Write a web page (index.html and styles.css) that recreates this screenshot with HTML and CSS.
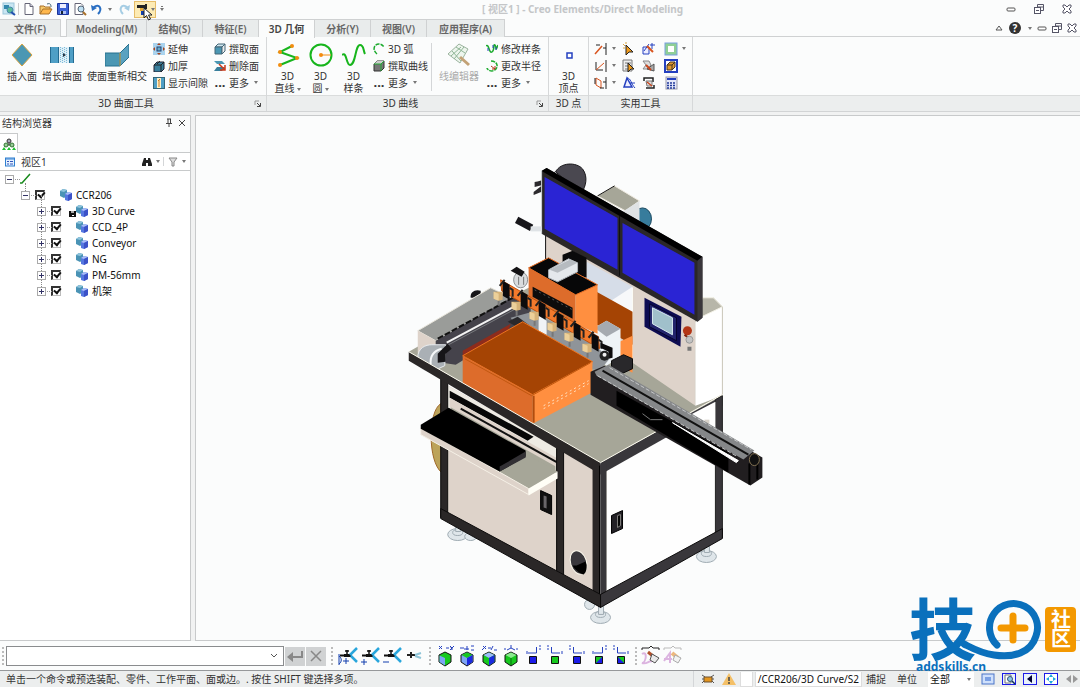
FILE: index.html
```html
<!DOCTYPE html>
<html lang="zh-CN">
<head>
<meta charset="utf-8">
<title>[ 视区1 ] - Creo Elements/Direct Modeling</title>
<link rel="stylesheet" href="styles.css">
</head>
<body>
<svg class="defs" aria-hidden="true">
  <symbol id="part" viewBox="0 0 12 12"><path d="M0 2l3-2 4 1v6l-3 2-4-2z" fill="#4a93b5"/><path d="M0 2l3-2 4 1-3 2z" fill="#8fc4dc"/><path d="M5 5l3-2 4 1v6l-4 2-3-1z" fill="#5577e0"/><path d="M5 5l3-2 4 1-4 2z" fill="#a9bdf7"/><path d="M8 6l4-2v6l-4 2z" fill="#3c52c8"/></symbol>
  <symbol id="win-min" viewBox="0 0 10 10"><rect x="1" y="4" width="8" height="3" rx="1" fill="#fff" stroke="#555"/></symbol>
  <symbol id="win-res" viewBox="0 0 10 10"><path d="M3.500 3V.5h6v6H7" fill="none" stroke="#556"/><rect x=".5" y="3.500" width="6" height="6" fill="#fff" stroke="#556"/><path d="M2 6.500h3M4 3h5" stroke="#556"/></symbol>
  <symbol id="win-x" viewBox="0 0 10 10"><path d="M1 1h2l2 2 2-2h2v2L7 5l2 2v2H7L5 7 3 9H1V7l2-2-2-2z" fill="#fff" stroke="#556"/></symbol>
  <symbol id="launch" viewBox="0 0 8 8"><path d="M1 5V1h4" fill="none" stroke="#999"/><path d="M3 3l3 3M6.500 3v3.500H3" fill="none" stroke="#444"/></symbol>
  <symbol id="tool" viewBox="0 0 22 20"><path d="M6 8h7l1 3H6z" fill="#111"/><path d="M2 9.500h5" stroke="#111" stroke-width="2"/><path d="M9 4v4M7 5h4" stroke="#111" stroke-width="1.500"/><path d="M12 9l7-7M13 10l6 6" stroke="#29a6dc" stroke-width="2.500"/></symbol>
</svg>
<div class="app">
  <header class="titlebar">
    <div class="quick">
      <button aria-label="Creo"><svg viewBox="0 0 14 14"><rect x="1" y="1" width="11" height="11" fill="#c9e6f2" stroke="#9cc6da"/><path d="M2 3h5v4H2z" fill="#3388ad"/><circle cx="8" cy="8" r="3" fill="#5dbb9b" stroke="#48a"/><path d="M9 10l4 3" stroke="#224fae" stroke-width="2"/></svg></button>
      <i class="bar"></i>
      <button aria-label="新建"><svg viewBox="0 0 14 14"><path d="M3 1.500h5l3 3v8H3z" fill="#fff" stroke="#667"/><path d="M8 1.500v3h3" fill="#ccd" stroke="#667"/></svg></button>
      <button aria-label="打开"><svg viewBox="0 0 14 14"><path d="M1 12V4h4l1 1h5v2" fill="#f7c96b" stroke="#a8712a"/><path d="M1 12l3-5h9l-3 5z" fill="#ffb84d" stroke="#a8712a"/><path d="M8 2c3-1 4 0 4 3" fill="none" stroke="#467"/></svg></button>
      <button aria-label="保存"><svg viewBox="0 0 14 14"><path d="M1.500 1.500h11v11h-11z" fill="#3b62d6" stroke="#1a349a"/><path d="M4 2h6v4H4z" fill="#eef"/><path d="M4 9h6v3H4z" fill="#aec0f3"/><path d="M5 9h2v3H5z" fill="#123"/></svg></button>
      <button aria-label="预览"><svg viewBox="0 0 14 14"><path d="M2 1.500h6l2 2v9H2z" fill="#fff" stroke="#667"/><circle cx="8" cy="7" r="3" fill="#bfe0f2" stroke="#567"/><path d="M10 10l3 3" stroke="#a8712a" stroke-width="2"/></svg></button>
      <button aria-label="撤销"><svg viewBox="0 0 14 14"><path d="M4 5c5-4 9 2 4 7" fill="none" stroke="#2a6fc2" stroke-width="2"/><path d="M1 3l1 6 5-3z" fill="#2a6fc2"/></svg></button>
      <button class="tiny" aria-label="撤销列表"><i class="caret"></i></button>
      <button aria-label="重做"><svg viewBox="0 0 14 14"><path d="M10 5C5 1 1 7 6 12" fill="none" stroke="#a5cde4" stroke-width="2"/><path d="M13 3l-1 6-5-3z" fill="#a5cde4"/></svg></button>
      <button class="hot" aria-label="测量"><svg viewBox="0 0 14 14"><path d="M1 3h8v3H1zM9 2h2v5H9z" fill="#222"/><path d="M4 6h3v3H4z" fill="#e8a82e"/><path d="M5 9h3v4H5z" fill="#123fae"/></svg><i class="caret"></i></button>
      <button class="tiny custom" aria-label="自定义"><i class="caret"></i></button>
    </div>
    <h1>[ 视区1 ] - Creo Elements/Direct Modeling</h1>
    <div class="winctl"><button aria-label="最小化"><svg><use href="#win-min"/></svg></button><button aria-label="还原"><svg><use href="#win-res"/></svg></button><button aria-label="关闭"><svg><use href="#win-x"/></svg></button></div>
    <svg class="cursor" viewBox="0 0 10 14"><path d="M1 1v10l2.500-2.500 2 4.500 2-1-2-4H9z" fill="#fff" stroke="#222"/></svg>
  </header>

  <nav class="tabs">
    <button class="file">文件(F)</button>
    <button class="w80">Modeling(M)</button><button>结构(S)</button><button>特征(E)</button><button class="on">3D 几何</button><button>分析(Y)</button><button>视图(V)</button><button class="w78">应用程序(A)</button>
    <div class="docctl">
      <button aria-label="折叠"><svg viewBox="0 0 10 10"><path d="M2 7l3-4 3 4z" fill="#fff" stroke="#555"/></svg></button>
      <button class="help" aria-label="帮助">?</button>
      <button class="tiny" aria-label="帮助列表"><i class="caret"></i></button>
      <button aria-label="最小化文档"><svg><use href="#win-min"/></svg></button><button aria-label="还原文档"><svg><use href="#win-res"/></svg></button><button aria-label="关闭文档"><svg><use href="#win-x"/></svg></button>
    </div>
  </nav>

  <div class="ribbon">
    <section class="group g1">
      <div class="tools">
        <button class="big"><svg viewBox="0 0 24 24"><path d="M12 1l10 11-10 11L2 12z" fill="#4b97b3" stroke="#d9a441"/></svg>插入面</button>
        <button class="big"><svg viewBox="0 0 24 24"><rect x="0" y="4" width="24" height="16" fill="#4f9fc6"/><rect x="9" y="4" width="10" height="16" fill="#dff0f8"/><path d="M.5 4v16M8.500 4v16M19.500 4v16M23.500 4v16" stroke="#256b91"/><path d="M10.500 4v16M12.500 5v15M14.500 4v16M16.500 5v15" stroke="#7fbbd8" stroke-dasharray="1 1"/><path d="M13 10l3 2-3 2z" fill="#234"/></svg>增长曲面</button>
        <button class="big"><svg viewBox="0 0 24 24"><path d="M0 10h15v13H0z" fill="#4b97b3" stroke="#27708e"/><path d="M15 10l9-9v13l-9 9z" fill="#5aa2c0" stroke="#27708e"/><path d="M15 10v13" stroke="#d9a441"/></svg>使面重新相交</button>
        <div class="col">
          <button><svg viewBox="0 0 12 12"><rect width="12" height="12" fill="#a9d3ee"/><rect x="4" y="4" width="4" height="4" fill="#68aac8" stroke="#247"/><path d="M4 2l2-2 2 2zM4 10l2 2 2-2zM2 4L0 6l2 2zM10 4l2 2-2 2z" fill="#a6441e"/></svg>延伸</button>
          <button><svg viewBox="0 0 12 12"><path d="M1 5l3-3h7v7l-3 3H1z" fill="#397f9c" stroke="#223"/><path d="M1 5h7v7M8 5l3-3M4 4l3-3" fill="none" stroke="#222"/></svg>加厚</button>
          <button><svg viewBox="0 0 12 12"><rect x=".5" y=".5" width="11" height="11" fill="#4f9fc6" stroke="#367"/><path d="M4 1h4v10H4z" fill="#fff1c8"/><path d="M6 3v7M5 4l2-2" stroke="#c47b20"/></svg>显示间隙</button>
        </div>
        <div class="col">
          <button><svg viewBox="0 0 12 12"><path d="M1 4l3-3h7l-3 3z" fill="#cfe6ef" stroke="#467"/><path d="M1 4h7v7H1z" fill="#4b97b3" stroke="#467"/><path d="M8 4l3-3v7l-3 3z" fill="#eee" stroke="#467"/></svg>撰取面</button>
          <button><svg viewBox="0 0 12 12"><path d="M0 1h8l3 3H3z" fill="#4b97b3"/><path d="M0 11h8l3-4H3z" fill="#397f9c"/><path d="M5 4l6 6M11 5v5H6" fill="none" stroke="#cc3a1a" stroke-width="1.500"/></svg>删除面</button>
          <button><b>...</b>更多<i class="caret"></i></button>
        </div>
      </div>
      <footer>3D 曲面工具<svg><use href="#launch"/></svg></footer>
    </section>
    <section class="group g2">
      <div class="tools">
        <button class="big"><svg viewBox="0 0 24 24"><path d="M16 3L4 9l17 6-17 7" fill="none" stroke="#17b51c" stroke-width="2"/><g fill="#f28c0f"><circle cx="16" cy="3" r="2"/><circle cx="4" cy="9" r="2"/><circle cx="21" cy="15" r="2"/><circle cx="4" cy="22" r="2"/></g></svg>3D<span>直线<i class="caret"></i></span></button>
        <button class="big"><svg viewBox="0 0 24 24"><circle cx="12" cy="12" r="10.500" fill="none" stroke="#17b51c" stroke-width="2"/><path d="M12 12h10" stroke="#f28c0f"/><circle cx="12" cy="12" r="2" fill="#f28c0f"/></svg>3D<span>圆<i class="caret"></i></span></button>
        <button class="big"><svg viewBox="0 0 24 24"><path d="M0 12c5-4 4 10 8 10 6 0 5-20 10-20 4 0 3 5 5 9" fill="none" stroke="#17b51c" stroke-width="2"/></svg>3D<span>样条</span></button>
        <div class="col">
          <button><svg viewBox="0 0 12 12"><path d="M4 11C-1 7 1 1 6 1c3 0 4 2 5 3" fill="none" stroke="#1cab2e" stroke-width="1.500" stroke-dasharray="4 1"/></svg>3D 弧</button>
          <button><svg viewBox="0 0 12 12"><path d="M1 4l3-3h7v7l-3 3H1z" fill="#777" stroke="#333"/><path d="M1 4l3-3h7L8 4z" fill="#ccc"/><path d="M1 4h7v7M8 4l3-3" fill="none" stroke="#2a3"/></svg>撰取曲线</button>
          <button><b>...</b>更多<i class="caret"></i></button>
        </div>
        <i class="rule"></i>
        <button class="big off" disabled><svg viewBox="0 0 24 24"><path d="M1 11L12 1l9 5-8 14z" fill="#edf5ed" stroke="#9ab39d"/><path d="M5 8l9 10M9 4l9 6M7 16l10-12M4 13l10-9" stroke="#8fb596"/><path d="M13 14l9 8" stroke="#c3a276" stroke-width="3"/></svg>线编辑器</button>
        <div class="col">
          <button><svg viewBox="0 0 12 12"><path d="M0 3c3-3 3 8 6 6S7 0 9 2s0 8 3 0" fill="none" stroke="#1cab2e" stroke-width="1.500"/><path d="M2 5v3M7 2v3M10 7V4" stroke="#24b"/></svg>修改样条</button>
          <button><svg viewBox="0 0 12 12"><path d="M5 1c8 0 8 9 1 10-3 0-5-2-5-3" fill="none" stroke="#1cab2e" stroke-width="1.500" stroke-dasharray="4 1"/><path d="M5 6l4 3M9 6v3H6" fill="none" stroke="#b5331b"/></svg>更改半径</button>
          <button><b>...</b>更多<i class="caret"></i></button>
        </div>
      </div>
      <footer>3D 曲线<svg><use href="#launch"/></svg></footer>
    </section>
    <section class="group g3">
      <div class="tools"><button class="big"><svg viewBox="0 0 24 24"><rect x="10" y="10" width="5" height="5" fill="#fff" stroke="#2440c0" stroke-width="1.500"/></svg>3D<span>顶点</span></button></div>
      <footer>3D 点</footer>
    </section>
    <section class="group g4">
      <div class="grid">
        <button aria-label="线"><svg viewBox="0 0 14 14"><path d="M1 12L8 4" stroke="#d9541e" stroke-width="1.500"/><path d="M2 3h4M12 1v12M9 6h3" stroke="#222"/></svg><i class="caret"></i></button>
        <button aria-label="选择"><svg viewBox="0 0 14 14"><path d="M4 3l7 7H7l-3 3z" fill="#f09a1a" stroke="#222"/><path d="M1 2l2 2M4 0v2M1 6h2" stroke="#d9a441"/></svg></button>
        <button aria-label="约束"><svg viewBox="0 0 14 14"><path d="M1 5h6v7H1z" fill="#eef" stroke="#2440c0"/><path d="M2 9l5-7M8 3h5M10 1v6" fill="none" stroke="#2440c0"/><path d="M5 4l6 6" stroke="#d9541e" stroke-width="2"/></svg></button>
        <button aria-label="边框"><svg viewBox="0 0 14 14"><rect x="1" y="1" width="12" height="12" fill="#8fd095" stroke="#7b9fe0"/><rect x="4" y="4" width="6" height="6" fill="#fff"/></svg><i class="caret"></i></button>
        <button aria-label="轴"><svg viewBox="0 0 14 14"><path d="M2 3v8h7M12 1v12" fill="none" stroke="#222"/><path d="M2 11l8-7" stroke="#d9541e"/></svg><i class="caret"></i></button>
        <button aria-label="列表选择"><svg viewBox="0 0 14 14"><path d="M1 1h9v11H1z" fill="#eee" stroke="#777"/><path d="M3 4h6M3 7h4M3 10h4" stroke="#777"/><path d="M6 4l6 6H9l-3 3z" fill="#f09a1a" stroke="#222"/></svg></button>
        <button aria-label="移动"><svg viewBox="0 0 14 14"><path d="M1 2h6l2 4-3 4H1l3-4z" fill="#ddd" stroke="#888"/><path d="M5 10l7-5v7z" fill="#aaa" stroke="#555"/><path d="M4 6l5 5" stroke="#c8451c" stroke-width="2"/></svg></button>
        <button aria-label="装配"><svg viewBox="0 0 14 14"><rect x="1" y="1" width="12" height="12" fill="#fff" stroke="#2440c0" stroke-width="2"/><path d="M3 6l3-3h5v5l-3 3H3z" fill="#e39a2c" stroke="#432"/><path d="M3 6h5v5M8 6l3-3" fill="none" stroke="#432"/></svg></button>
        <button aria-label="平面"><svg viewBox="0 0 14 14"><path d="M2 2l5 3v7L2 9z" fill="none" stroke="#d9541e"/><path d="M1 2v6M6 12h4M9 6h3M12 1v12" stroke="#222"/></svg><i class="caret"></i></button>
        <button aria-label="尺寸"><svg viewBox="0 0 14 14"><path d="M5 2l-3 9h8z" fill="#eef" stroke="#2440c0" stroke-width="1.500"/><path d="M5 2c4 0 4 6 8 10M8 7l5 0" fill="none" stroke="#2440c0"/></svg></button>
        <button aria-label="更新"><svg viewBox="0 0 14 14"><path d="M2 5V2h9v4M12 9v3H4" fill="none" stroke="#222" stroke-width="1.500"/><path d="M4 5h6v5H5z" fill="#ddd" stroke="#777"/><path d="M5 6l5 4" stroke="#c8451c" stroke-width="1.500"/></svg></button>
        <button aria-label="计算器"><svg viewBox="0 0 14 14"><rect x="2" y="1" width="11" height="12" fill="#e4e8fb" stroke="#99a"/><path d="M3 3h9" stroke="#2440c0" stroke-width="2"/><path d="M3 7h9M3 9.500h9M3 12h9" stroke="#223a9a" stroke-width="1.500" stroke-dasharray="2 1"/></svg></button>
      </div>
      <footer>实用工具</footer>
    </section>
    <section class="group rest"><div class="tools"></div><footer></footer></section>
  </div>

  <main>
    <aside>
      <div class="ptitle"><h2>结构浏览器</h2><button aria-label="固定"><svg viewBox="0 0 10 10"><path d="M3 1h4M4 1v4M6.500 1v4M2 5.500h6M5 6v3" stroke="#444" fill="none"/></svg></button><button aria-label="关闭面板"><svg viewBox="0 0 10 10"><path d="M2 2l6 6M8 2L2 8" stroke="#444"/></svg></button></div>
      <div class="ptab"><button aria-label="结构"><svg viewBox="0 0 14 14"><path d="M7 4v4M3 8h8M3 8v2M11 8v2" stroke="#333"/><circle cx="7" cy="4" r="2" fill="#aab" stroke="#333"/><circle cx="4" cy="8" r="2" fill="#9c9" stroke="#373"/><circle cx="10" cy="8" r="2" fill="#9c9" stroke="#373"/><path d="M0 13l2-3 2 3zM5 13l2-3 2 3zM10 13l2-3 2 3z" fill="#20c030"/></svg></button></div>
      <div class="pbar"><svg class="lst" viewBox="0 0 10 10"><rect x=".5" y="1" width="9" height="8" fill="#e5f1ff" stroke="#2f7fd0"/><path d="M1 2h8" stroke="#2f7fd0"/><path d="M2 4.500h2M2 7h2M5 4.500h3M5 7h3" stroke="#35b"/></svg><span>视区1</span>
        <button aria-label="查找"><svg viewBox="0 0 10 10"><path d="M2 1h2v2h2V1h2l2 6v2H6V6H4v3H0V7z" fill="#222"/></svg></button><button class="tiny" aria-label="查找列表"><i class="caret"></i></button><i class="rule"></i><button aria-label="筛选"><svg viewBox="0 0 10 10"><path d="M1 1h8L6 5v4H4V5z" fill="#ddd" stroke="#888"/></svg></button><button class="tiny" aria-label="筛选列表"><i class="caret"></i></button></div>
      <ul class="tree">
        <li><i class="exp"></i><svg class="slash" viewBox="0 0 12 12"><path d="M1 10l2 0L11 1" fill="none" stroke="#188a1c" stroke-width="1.500"/></svg></li>
        <li class="l1"><i class="exp"></i><label><input type="checkbox" checked><i class="slot"></i><svg><use href="#part"/></svg>CCR206</label></li>
        <li class="l2"><i class="exp plus"></i><label><input type="checkbox" checked><i class="slot disk"></i><svg><use href="#part"/></svg>3D Curve</label></li>
        <li class="l2"><i class="exp plus"></i><label><input type="checkbox" checked><i class="slot"></i><svg><use href="#part"/></svg>CCD_4P</label></li>
        <li class="l2"><i class="exp plus"></i><label><input type="checkbox" checked><i class="slot"></i><svg><use href="#part"/></svg>Conveyor</label></li>
        <li class="l2"><i class="exp plus"></i><label><input type="checkbox" checked><i class="slot"></i><svg><use href="#part"/></svg>NG</label></li>
        <li class="l2"><i class="exp plus"></i><label><input type="checkbox" checked><i class="slot"></i><svg><use href="#part"/></svg>PM-56mm</label></li>
        <li class="l2"><i class="exp plus"></i><label><input type="checkbox" checked><i class="slot"></i><svg><use href="#part"/></svg>机架</label></li>
      </ul>
    </aside>
    <div class="viewport">
      <svg class="machine" viewBox="195 116 885 525" role="img" aria-label="CCR206">
        <!-- feet -->
        <g fill="#dfe6ea" stroke="#9fabb2"><ellipse cx="457" cy="535" rx="10" ry="6"/><ellipse cx="457" cy="533" rx="5" ry="3"/><path d="M455 524h5v8h-5z"/><ellipse cx="470" cy="537" rx="6" ry="4"/><ellipse cx="600" cy="618" rx="10" ry="6"/><ellipse cx="600" cy="615" rx="5" ry="3"/><path d="M598 606h5v9h-5z"/><ellipse cx="706" cy="557" rx="10" ry="6"/><ellipse cx="706" cy="554" rx="5" ry="3"/><path d="M704 544h5v9h-5z"/><ellipse cx="589" cy="605" rx="5" ry="5"/></g>
        <path d="M440 404c-13 8-13 58 1 69z" fill="#bca35a" stroke="#a0682a"/>
        <!-- back tower -->
        <path d="M555 172c5-10 21-10 27-3 6 8 3 18-1 24z" fill="#4a4850" stroke="#19181b"/>
        <path d="M556 170c-8 8-14 11-22 12v5l8-2-9 7v3l10-4" fill="#2c2a2e"/>
        <ellipse cx="642" cy="219" rx="9" ry="11" fill="#377c9c" stroke="#1c4a60"/>
        <path d="M597 196l17-10 25 15-14 10z" fill="#a6a698" stroke="#eee9df"/><path d="M597 196l17-10" stroke="#111"/>
        <path d="M620 213l19-12v22z" fill="#dfe2e4"/>
        <path d="M545 234l150 87v86l-63-35-87-70z" fill="#ded3ca"/>
        <path d="M545 234v36" stroke="#111"/>
        <path d="M586 262l46 25v40l-46-30z" fill="#d6dde8"/><path d="M632 288v85" stroke="#fffef0"/>
        <path d="M609 302l23-15v25z" fill="#f7f8fa"/>
        <path d="M695 320l18-22 9 9v88l-27 14z" fill="#fff" stroke="#c8c5b8"/><path d="M695 320l7-22h11l9 9z" fill="#b7b6a9" stroke="#f3f1e6"/>
        <path d="M696 322v85" stroke="#fff" stroke-width="2"/>
        <!-- table top -->
        <path d="M408 352l60-34 60-30 104 75 63 43 27-10-122 67z" fill="#a6a698"/>
        <!-- control panel -->
        <path d="M644 298l37 19-1 30-36-20z" fill="#0d0c52"/><path d="M649 304l27 14v23l-27-14z" fill="#22246c" stroke="#05042c"/><path d="M652 308l20 10v17l-20-11z" fill="#a0c0cb" stroke="#d8eaf0"/>
        <circle cx="687" cy="331" r="4.500" fill="#b43616"/><path d="M684 335l4 3" stroke="#801f0a" stroke-width="2"/><circle cx="689" cy="340" r="3.500" fill="#c3c3c3" stroke="#999"/><path d="M687 347h4v4h-4z" fill="#777"/>
        <!-- monitors -->
        <path d="M541 171l5-3 156 89v61l-5 4-156-88z" fill="#2a2727"/><path d="M541 171l5-3 156 89-5 4z" fill="#000"/><path d="M697 261l5-4v61l-5 4z" fill="#39363b"/><path d="M541 171v63" stroke="#cdd2d4"/>
        <path d="M544 177l73 41v52l-73-41zM622 223l72 40v52l-72-42z" fill="#2a24d4"/><path d="M619 216v60" stroke="#111"/>
        <path d="M516 220l15 8" stroke="#17161a" stroke-width="7"/><path d="M530 229h11" stroke="#dfe3e6" stroke-width="5"/>
        <!-- rear orange housing -->
        <path d="M596 292l36 20v33l-36-20z" fill="#a54404"/><path d="M619 342l13-6v37l-13-7z" fill="#ff8f40"/>
        <path d="M594 328l12-7 14 8v28l-14 9-12-8z" fill="#eef3f6"/><path d="M594 328l12-7 14 8-14 8z" fill="#a5aab0"/>
        <!-- left conveyor -->
        <path d="M470 298c-1-6 5-9 10-7v7z" fill="#161518"/>
        <path d="M417 331l73-43 21 10-76 43z" fill="#9a9c99" stroke="#e9e6dc"/><path d="M417 331l18 10v21l-18-9z" fill="#ded3ca"/>
        <path d="M435 341l77-44 18 10v12l-75 46-20-3z" fill="#45434b"/>
        <path d="M437 339l75-41" stroke="#111" stroke-width="2" stroke-dasharray="6 2"/><path d="M446 343l69-37" stroke="#f3f3f3" stroke-width="2"/><path d="M446 346l69-37" stroke="#77797d"/>
        <path d="M462 351l48-27-2 6-46 26z" fill="#8e2c1c"/>
        <path d="M417 358c0-10 8-13 14-13h14l-1 21-13 6c-6 0-14-4-14-9z" fill="#aab0b5" stroke="#e8ecef"/><path d="M430 365c-1-9 3-14 11-16" fill="none" stroke="#f6f8f9" stroke-width="2"/><path d="M437 363v-9l10-10 4 5-6 5v8z" fill="#161518"/>
        <!-- grey carriage bed -->
        <path d="M510 318l22-6 64 35 13 12-10 12-30-8-48-28z" fill="#8f9499"/><path d="M538 316l8 5v14l-8-4z" fill="#f0f3f5"/>
        <path d="M507 322l10-5 11 8-8 4z" fill="#29282b"/>
        <!-- head -->
        <path d="M562 255l10-4 14 7v20l-24-8z" fill="#0a0a0b"/>
        <path d="M528 268l47 27v32l-47-28z" fill="#dd6c2b"/><path d="M575 295l22-10v49l-22-10z" fill="#ff8f40"/><path d="M528 268l20-10 49 27-22 10z" fill="#070708" stroke="#e66a20"/>
        <path d="M548 270l20-11 9 4v9l-20 10-9-4z" fill="#e4e8ec" stroke="#aeb4ba"/><path d="M549 270l20-10 8 3-20 10z" fill="#b6bbc0"/>
        <path d="M532 287l40 21v11l-40-22z" fill="#0c0c0c"/><path d="M532 299l38 21" stroke="#b08a52" stroke-width="2" stroke-dasharray="2 2"/><path d="M534 290l38 20" stroke="#555" stroke-dasharray="2 3"/>
        <ellipse cx="520" cy="280" rx="7" ry="8" fill="#d9dcde" stroke="#8d9194"/><path d="M510 271l6-4 8 5-3 5z" fill="#141315"/><path d="M518 277v8M523 277v8" stroke="#777"/>
        <path d="M500 280l98 57 1 12-98-58z" fill="#f37a2c" stroke="#c1500c"/>
        <g id="nozzle"><path d="M502 281l7 4v15l-7-4z" fill="#0c0b0c"/><path d="M499 286l5-6M509 288l3 2v7" fill="none" stroke="#222" stroke-width="2"/><path d="M493 292h9v8l-4 1-5-2z" fill="#d6b277"/><path d="M493 292l5 2v7l-5-2z" fill="#ecd09a"/><path d="M498 301v5" stroke="#777" stroke-width="2"/></g>
        <use href="#nozzle" x="18" y="10"/><use href="#nozzle" x="36" y="20"/><use href="#nozzle" x="54" y="31"/><use href="#nozzle" x="71" y="41"/><use href="#nozzle" x="89" y="52"/>
        <path d="M600 343l12 5v10l-4 1v-7l-8-4z" fill="#0c0b0c"/><circle cx="604" cy="356" r="5" fill="#222"/><circle cx="604" cy="355" r="2" fill="#eee"/>
        <path d="M611 361l12-6 9 4v10l-13 6-8-4z" fill="#29282b" stroke="#0b0b0b"/>
        <!-- big orange cover -->
        <path d="M462 356l60-34 70 40-60 33z" fill="#a54404" stroke="#f0731d"/><path d="M462 356l70 39v29l-70-40z" fill="#dd6c2b"/><path d="M532 395l60-33-1 31-59 31z" fill="#ff8f40"/><path d="M533 396v27" stroke="#b04c0e" stroke-width="2"/><path d="M464 359l67 37 59-33" fill="none" stroke="#c1570f"/><path d="M543 406l45-25M543 409l45-25" stroke="#ffe2c4" stroke-dasharray="2 3"/>
        <!-- front cabinet -->
        <path d="M446 385l112 64v129l-112-60z" fill="#ded3ca"/><path d="M563 450l32 18v126l-32-15z" fill="#ded3ca"/><path d="M605 467l112-63v132l-112 60z" fill="#fefefe"/>
        <path d="M447 396v117l109 61M594 470v121M606 471v120" fill="none" stroke="#fffdf2"/>
        <path d="M447 386l111 62v26l-111-62z" fill="#eeebe4"/><path d="M450 400l105 59v14l-105-62z" fill="#a6a698"/><path d="M449 391l84 46-6 4-78-43z" fill="#070707"/><path d="M449 398l108 61v9l-108-61z" fill="#ded3ca"/><path d="M460 409l97 54" stroke="#111" stroke-width="2"/>
        <path d="M440 378h7v140h-7zM556 447h7v134h-7z" fill="#2a2727" stroke="#0c0b0b" stroke-width="1"/>
        <path d="M408 352l192 111v12L408 361z" fill="#2a2727"/><path d="M600 463l122-67v10l-122 69z" fill="#39373b"/><path d="M408 352l192 111 122-68" fill="none" stroke="#fffdf0"/>
        <path d="M592 461l8 4v143l-8-5z" fill="#2a2727"/><path d="M600 465l6-3v142l-6 4z" fill="#39373b"/><path d="M599 466v141" stroke="#000"/>
        <path d="M715 400l7-4v142l-7 4z" fill="#39373b" stroke="#222"/>
        <path d="M440 509l160 86v13l-160-89z" fill="#2a2727" stroke="#0c0b0b"/><path d="M600 595l122-66v10l-122 69z" fill="#39373b" stroke="#0c0b0b"/>
        <!-- keyboard tray -->
        <path d="M420 429l28-17 109 60-29 18z" fill="#a6a698"/><path d="M420 428l108 61v6l-108-60z" fill="#ded3ca" stroke="#f5f0e6"/><path d="M528 489l29-17v7l-29 17z" fill="#fffef6"/>
        <path d="M420 425l28-17 77 43v6l-26 15-79-43z" fill="#000"/><path d="M499 467l26-15v6l-26 14z" fill="#323034"/>
        <!-- handles and port -->
        <path d="M540 491l11 5v19l-11-5z" fill="#111" stroke="#000"/><path d="M543 496l3 1v12l-3-1z" fill="#696669"/><path d="M611 516l11-5v18l-11 5z" fill="#232126" stroke="#000"/><path d="M617 516l3-1v11l-3 2z" fill="#050505" stroke="#817f7c"/>
        <ellipse cx="578" cy="563" rx="8" ry="12" transform="rotate(-18 578 563)" fill="#39373c" stroke="#fffdf0"/><path d="M576 566l9-4c2 6 1 11-2 13-4-1-9-5-11-9z" fill="#000"/>
        <!-- right conveyor -->
        <path d="M690 415l25-13v38z" fill="#fff"/><path d="M704 420h5v4h-5z" fill="#d8d3ca"/>
        <path d="M590 372l14-6 158 92v20l-12 8-160-91z" fill="#211e20"/><path d="M616 391l112 62v20l-112-67z" fill="#000"/><path d="M749 464v21M757 460v20" stroke="#000" stroke-width="2"/>
        <path d="M594 372l14-7 146 86-11 9-147-84z" fill="#858789"/><path d="M602 371l146 84" stroke="#111" stroke-width="2"/><path d="M609 368l142 82M597 376l140 81" stroke="#c5c7c8" stroke-dasharray="4 2"/><path d="M672 423l66 38-2 2z" fill="#fff" stroke="#fff"/><path d="M642 414l8 6h12" fill="none" stroke="#777"/>
        <ellipse cx="754" cy="460" rx="5" ry="6" fill="#111" stroke="#806f50"/>
      </svg>
    </div>
  </main>

  <div class="command">
    <i class="grip"></i>
    <div class="combo"><input type="text" aria-label="命令"><button aria-label="命令历史"><svg viewBox="0 0 10 10"><path d="M2 3l3 3 3-3" fill="none" stroke="#555"/></svg></button></div>
    <button class="gray" aria-label="确认"><svg viewBox="0 0 20 18"><path d="M17 4v6H5" fill="none" stroke="#888" stroke-width="2"/><path d="M8 5v10L2 10z" fill="#888"/></svg></button>
    <button class="gray" aria-label="取消"><svg viewBox="0 0 20 18"><path d="M5 4l10 10M15 4L5 14" stroke="#888" stroke-width="1.500"/></svg></button>
    <i class="grip"></i>
    <div class="set">
      <button aria-label="新建视图"><svg viewBox="0 0 22 20"><use href="#tool"/><path d="M1 8v11M1 10c3 2 3 6 0 8M8 12v6M5 15h6" fill="none" stroke="#123fae"/></svg></button>
      <button aria-label="添加"><svg viewBox="0 0 22 20"><use href="#tool"/><path d="M4 13v6M1 16h6" stroke="#123fae"/></svg></button>
      <button aria-label="移除"><svg viewBox="0 0 22 20"><use href="#tool"/><path d="M1 16h6" stroke="#123fae"/></svg></button>
      <button aria-label="显示"><svg viewBox="0 0 22 20"><path d="M3 9h8" stroke="#222" stroke-width="2"/><path d="M7 6v6" stroke="#222" stroke-width="2"/><path d="M11 9l6-2M11 10l6 2" stroke="#8fc5d8" stroke-width="2"/></svg></button>
    </div>
    <i class="grip"></i>
    <div class="set">
      <button aria-label="视图一"><svg viewBox="0 0 22 22"><path d="M5 1l3 3M8 1L5 4M12 3h3M16 1l2 2v2M20 1l-4 4" stroke="#2440c0"/><path d="M11 7l6 3v7l-6 4-6-4v-7z" fill="#16c91e" stroke="#111"/><path d="M5.500 10.500L11 13v7.500L5.500 17z" fill="#7da4f4"/></svg></button>
      <button aria-label="视图二"><svg viewBox="0 0 22 22"><path d="M4 3h4M8 4h5M11 1v4M15 1h3M15 5h3" stroke="#2440c0"/><path d="M11 7l6 3v7l-6 4-6-4v-7z" fill="#7da4f4" stroke="#111"/><path d="M5.500 10L11 7.500 16.500 10 11 13z" fill="#16c91e"/><path d="M11 13l5.500-3v7L11 20.500z" fill="#1b2ae0"/></svg></button>
      <button aria-label="视图三"><svg viewBox="0 0 22 22"><path d="M5 1l3 3M8 1L4 5M10 3h3M15 1l-2 4M16 5h3" stroke="#2440c0"/><path d="M11 7l6 3v7l-6 4-6-4v-7z" fill="#16c91e" stroke="#111"/><path d="M5.500 10L11 7.500 16.500 10 11 13z" fill="#9cbcf8"/><path d="M11 13l5.500-3v7L11 20.500z" fill="#1b2ae0"/></svg></button>
      <button aria-label="视图四"><svg viewBox="0 0 22 22"><path d="M11 0v3M11 3l-4 2M11 3l4 2M5 3v2M17 3v2" stroke="#2440c0"/><path d="M11 7l6 3v7l-6 4-6-4v-7z" fill="#16c91e" stroke="#111"/><path d="M5.500 10L11 7.500 16.500 10 11 13z" fill="#8bea8e"/><path d="M11 13v7" stroke="#0a6a10"/></svg></button>
      <button aria-label="前"><svg viewBox="0 0 22 22"><path d="M14.500 2v6H6M17 1h2M17 4h2M5 6v3" fill="none" stroke="#2440c0"/><path d="M7.500 11.500h7v7h-7z" fill="#1b1be8" stroke="#111"/></svg></button>
      <button aria-label="上"><svg viewBox="0 0 22 22"><path d="M7.500 2v6H16M3 1h2M3 4h2M18 6v3" fill="none" stroke="#2440c0"/><path d="M7.500 11.500h7v7h-7z" fill="#16c91e" stroke="#111"/></svg></button>
      <button aria-label="后"><svg viewBox="0 0 22 22"><path d="M7.500 2v6H16M3 1h2M3 4h2M18 6v3" fill="none" stroke="#2440c0"/><path d="M7.500 11.500h7v7h-7z" fill="#1b1be8" stroke="#111"/></svg></button>
      <button aria-label="左"><svg viewBox="0 0 22 22"><path d="M14.500 2v6H6M17 1h2M17 4h2M5 6v3" fill="none" stroke="#2440c0"/><path d="M7.500 11.500h7v7h-7z" fill="#1b1be8" stroke="#111"/><path d="M8 12h6l-6 6z" fill="#16c91e"/></svg></button>
      <button aria-label="右"><svg viewBox="0 0 22 22"><path d="M7.500 2v6H16M3 1h2M3 4h2M18 6v3" fill="none" stroke="#2440c0"/><path d="M7.500 11.500h7v7h-7z" fill="#1b1be8" stroke="#111"/><path d="M8 12h6v6z" fill="#16c91e"/></svg></button>
    </div>
    <i class="grip"></i>
    <div class="set">
      <button aria-label="擦除"><svg viewBox="0 0 22 22"><path d="M2 5V3h7l2-2 2 2h6v2" fill="none" stroke="#222"/><path d="M2 9c6-4 4 9 0 9 5 2 8-4 10-1" fill="none" stroke="#dcb4e0" stroke-width="2"/><path d="M8 7l6 5" stroke="#b0502a" stroke-width="3"/><path d="M12 9l7 4-4 5-5-3z" fill="#e9e9e9" stroke="#555"/></svg></button>
      <button aria-label="擦除全部"><svg viewBox="0 0 22 22"><path d="M2 5V3h7l2-2 2 2h6v2" fill="none" stroke="#bbb"/><path d="M2 16l6-8v10M2 14h8" fill="none" stroke="#dcb4e0" stroke-width="2"/><path d="M10 8l6 5" stroke="#edb77e" stroke-width="4"/><path d="M13 10l6 3-3 5-5-3z" fill="#f2f2f2" stroke="#aaa"/></svg></button>
    </div>
  </div>

  <footer class="status">
    <p>单击一个命令或预选装配、零件、工作平面、面或边。. 按住 SHIFT 键选择多项。</p>
    <i class="rule"></i>
    <button aria-label="消息"><svg viewBox="0 0 14 12"><path d="M1 2l3 2M13 2l-3 2M1 10l2-2M13 10l-2-2M1 6h12" stroke="#555"/><path d="M3 4h8v5H3z" fill="#e3951e" stroke="#6a5130"/></svg></button>
    <button aria-label="警告"><svg viewBox="0 0 14 12"><path d="M7 0l7 12H0z" fill="#f4c067"/><path d="M7 4v4M7 9v2" stroke="#444" stroke-width="1.500"/></svg></button>
    <span class="box blank"></span>
    <span class="box path">/CCR206/3D Curve/S2</span>
    <button>捕捉</button><button>单位</button>
    <label class="filter"><select aria-label="选择过滤"><option>全部</option></select><i class="caret"></i></label>
    <div class="sicons">
      <button aria-label="选择框"><svg viewBox="0 0 14 12"><rect x="1" y="1" width="12" height="10" fill="#cfe0fb" stroke="#4a74c8"/><path d="M4 4h6v4H4z" fill="#7ba0e4"/></svg></button>
      <button aria-label="缩放"><svg viewBox="0 0 14 12"><rect x=".5" y=".5" width="13" height="11" fill="#e8f1fc" stroke="#1b1be8"/><path d="M3 2h6v8H3z" fill="#fff" stroke="#777"/><circle cx="8" cy="6" r="2.500" fill="#8fc5e8" stroke="#357"/><path d="M10 8l3 3" stroke="#135" stroke-width="1.500"/></svg></button>
      <button aria-label="上一个"><svg viewBox="0 0 14 12"><rect x=".5" y=".5" width="13" height="11" fill="#e8f1fc" stroke="#1b1be8"/><path d="M4 6l5-4v8z" fill="#003"/></svg></button>
      <button aria-label="适合窗口"><svg viewBox="0 0 14 12"><rect x=".5" y=".5" width="13" height="11" fill="#fff" stroke="#1b1be8"/><path d="M7 1l2 3H5zM7 11l2-3H5zM2 6l3-2v4zM12 6L9 4v4z" fill="#1aa7dd"/></svg></button>
      <button aria-label="滚动"><svg viewBox="0 0 14 12"><path d="M6 2v8L1 6zM8 2v8l5-4z" fill="#999"/></svg></button>
    </div>
  </footer>

  <svg class="logo" viewBox="905 595 175 78" role="img" aria-label="技田社区 addskills.cn">
    <text class="ji" x="909" y="655">技</text>
    <path d="M997 645a24 24 0 1 1 39-9c-5 17-23 22-42 19-14-2-22-7-30-11" fill="none" stroke="#0a70bc" stroke-width="7" stroke-linecap="round"/>
    <path d="M1013 616v24M1001 628h24" stroke="#f39800" stroke-width="7" stroke-linecap="round"/>
    <rect x="1045" y="607" width="31" height="45" rx="4" fill="#f39800"/>
    <text class="sq" x="1051" y="627">社</text><text class="sq" x="1051" y="646">区</text>
    <text class="url" x="916" y="671">addskills.cn</text>
  </svg>
</div>
</body>
</html>
```
FILE: styles.css
```css
* { box-sizing: border-box; }
html, body { height: 100%; margin: 0; }
body { font: 10px/12px "Noto Sans", "Noto Sans CJK SC", sans-serif; color: #333; background: #fbfcfc; }
h1, h2, p, ul { margin: 0; padding: 0; }
button { font: inherit; color: inherit; background: none; border: 0; padding: 0; margin: 0; white-space: nowrap; }
svg { display: block; flex: none; }
.defs { display: none; }
.app { position: relative; display: flex; flex-direction: column; min-height: 100vh; }
.caret { display: inline-block; flex: none; border: 2px solid transparent; border-top: 3px solid #777; border-bottom: 0; margin-left: 2px; vertical-align: middle; }
.rule { width: 1px; align-self: stretch; background: #d4d6d8; }

.titlebar { position: relative; display: flex; align-items: center; height: 18px; }
.quick { display: flex; align-items: center; width: 482px; height: 17px; }
.quick button { display: flex; align-items: center; justify-content: center; width: 17px; height: 17px; }
.quick svg { width: 14px; height: 14px; }
.quick .bar { width: 1px; height: 12px; background: #ccc; margin: 0 1px; }
.quick .tiny { width: 10px; }
.quick .caret { margin: 0; }
.quick .hot { width: 22px; gap: 1px; margin-left: 2px; background: #fdebb4; border: 1px solid #e6bd6a; }
.quick .custom { width: 11px; }
.custom .caret { box-shadow: 0 -3px 0 -1px #777; }
.cursor { position: absolute; left: 143px; top: 7px; width: 10px; height: 14px; z-index: 3; }
.titlebar h1 { font-size: 10px; line-height: 16px; font-weight: 700; color: #c4c6c8; white-space: nowrap; }
.winctl { display: flex; gap: 18px; margin-left: auto; padding-right: 8px; }
.winctl svg, .docctl svg { width: 10px; height: 10px; }

.tabs { display: flex; height: 19px; padding-top: 1px; border-bottom: 1px solid #cfd1d2; }
.tabs > button { width: 56px; height: 18px; background: #e9ecec; border: 1px solid #cfd1d2; border-left: 0; border-bottom: 0; color: #666; font-weight: 600; }
.tabs > .file { width: 61px; margin-right: 5px; }
.tabs > .w80 { width: 81px; border-left: 1px solid #cfd1d2; }
.tabs > .w78 { width: 78px; }
.tabs > .on { background: #fbfcfc; height: 19px; color: #444; }
.docctl { display: flex; align-items: center; gap: 5px; margin-left: auto; padding-right: 3px; }
.docctl .help { width: 12px; height: 12px; border-radius: 50%; background: #333; color: #fff; font-weight: 700; line-height: 12px; }

.ribbon { display: flex; border-bottom: 1px solid #d2d4d5; }
.group { display: flex; flex-direction: column; border-right: 1px solid #d6d8d9; }
.group footer { position: relative; height: 16px; line-height: 15px; text-align: center; background: #eceeee; border-top: 1px solid #dadcdc; }
.g1 footer { padding-right: 14px; }
.g2 footer { padding-right: 14px; }
.group footer svg { position: absolute; right: 4px; top: 4px; width: 8px; height: 8px; }
.tools { display: flex; height: 58px; }
.g1 { width: 267px; } .g2 { width: 282px; } .g3 { width: 40px; } .g4 { width: 104px; } .rest { flex: 1; border: 0; }
.big { display: flex; flex-direction: column; align-items: center; padding: 6px 2px 0; min-width: 33px; }
.big svg { width: 24px; height: 24px; margin-bottom: 3px; }
.g1 .tools { padding-left: 5px; gap: 1px; }
.g2 .tools { padding-left: 4px; }
.g3 .tools { justify-content: center; }
.off { color: #aaa; padding-left: 5px; padding-right: 4px; }
.col { display: flex; flex-direction: column; padding-top: 3px; margin-left: 3px; }
.col + .col { margin-left: 5px; }
.col button { display: flex; align-items: center; gap: 3px; height: 17px; }
.col svg, .col b { width: 12px; height: 12px; }
.col b { font-size: 13px; line-height: 10px; text-align: center; }
.g2 .rule { margin: 6px 2px 4px 3px; align-self: stretch; }
.grid { display: grid; grid-template-columns: 28px 20px 22px 28px; grid-auto-rows: 17px; height: 58px; padding: 3px 0 0 5px; }
.grid button { display: flex; align-items: center; }
.grid svg { width: 14px; height: 14px; }
.grid .caret { margin-left: 4px; }

main { flex: 1; display: flex; gap: 4px; min-height: 0; padding-top: 3px; background: #f1f2f2; }
aside { width: 191px; background: #fff; border: 1px solid #c8cacb; border-left: 0; }
.ptitle { display: flex; align-items: center; height: 14px; padding: 0 3px 0 2px; background: #fbfcfc; }
.ptitle h2 { flex: 1; font-size: 10px; font-weight: 400; }
.ptitle button { margin-left: 3px; }
.ptitle svg, .pbar svg { width: 10px; height: 10px; }
.ptab { height: 23px; padding-top: 3px; border-bottom: 1px solid #c8cacb; background: #fbfcfc; }
.ptab button { width: 18px; height: 20px; background: #fff; border: 1px solid #c8cacb; border-left: 0; border-bottom: 0; padding: 0 0 0 2px; }
.ptab svg { width: 14px; height: 14px; }
.pbar { display: flex; align-items: center; height: 18px; padding: 0 1px 0 5px; border-bottom: 1px solid #c8cacb; }
.pbar span { flex: 1; margin-left: 6px; }
.pbar .tiny { display: flex; justify-content: center; width: 11px; }
.pbar .caret { margin: 0; }
.pbar .rule { margin: 4px 4px 4px 0; }
.tree { list-style: none; }
.tree li { display: flex; align-items: center; height: 16px; padding-left: 5px; position: relative; color: #111; }
.tree .l1 { padding-left: 21px; }
.tree .l2 { padding-left: 37px; }
.tree label { display: flex; align-items: center; }
.tree svg { width: 12px; height: 12px; margin-right: 4px; }
.exp { position: relative; width: 9px; height: 9px; border: 1px solid #aaa; background: linear-gradient(#336, #336) center / 5px 1px no-repeat #fff; z-index: 1; }
.plus { background: linear-gradient(#336, #336) center / 5px 1px no-repeat, linear-gradient(#336, #336) center / 1px 5px no-repeat #fff; }
.exp::after { content: ""; position: absolute; left: 9px; top: 3px; width: 5px; border-top: 1px dotted #999; }
.l2::before { content: ""; position: absolute; left: 41px; top: -8px; height: 16px; border-left: 1px dotted #888; }
.l1::before { content: ""; position: absolute; left: 25px; top: -4px; height: 8px; border-left: 1px dotted #888; }
.slash { margin-left: 5px; }
.tree input { appearance: none; position: relative; width: 10px; height: 10px; margin: 0 0 0 5px; border: 1px solid #bbb; border-top: 2px solid #333; border-left: 2px solid #333; background: #fff; }
.tree input:checked::after { content: ""; position: absolute; left: 2px; top: 0; width: 3px; height: 5px; border: solid #111; border-width: 0 2px 2px 0; box-sizing: content-box; transform: rotate(40deg) translate(-1px, -1px); }
.slot { width: 7px; height: 6px; margin-left: 8px; }
.disk { align-self: flex-end; background: linear-gradient(#fff, #fff) 3px 4px / 2px 1px no-repeat, linear-gradient(#aaa, #aaa) 2px 0 / 3px 2px no-repeat #111; }
.viewport { flex: 1; min-width: 0; background: #fbfcfc; border: 1px solid #c8cacb; border-right: 0; }
.machine { width: 100%; height: 100%; }

.command { display: flex; align-items: center; height: 29px; padding-top: 1px; background: #fbfcfc; }
.grip { width: 2px; height: 18px; margin: 0 2px; background: repeating-linear-gradient(#bbb 0 2px, transparent 2px 4px); }
.set + .grip { margin: 0 3px; }
.gray + .grip { margin: 0 5px; }
.combo { display: flex; align-items: center; width: 278px; height: 20px; border: 1px solid #8a8c8e; background: #fff; }
.combo input { flex: 1; min-width: 0; border: 0; outline: 0; background: none; font: inherit; }
.combo button { width: 14px; }
.combo svg { width: 10px; height: 10px; }
.gray { width: 20px; height: 19px; margin-left: 1px; background: #d0d2d3; }
.gray svg { width: 20px; height: 18px; }
.set { display: flex; }
.set button { width: 22px; }
.set svg { width: 22px; height: 22px; }

.status { display: flex; align-items: center; height: 17px; background: #eceeee; border-top: 1px solid #96989a; color: #333; white-space: nowrap; }
.status p { flex: 1; padding-left: 6px; }
.status button { margin-left: 7px; }
.status svg { width: 14px; height: 12px; }
.box { height: 15px; line-height: 15px; background: #fff; border: 1px solid #ddd; border-top: 0; }
.blank { width: 13px; margin-left: 4px; }
.path { margin-left: 2px; padding: 0 2px; color: #111; }
.status .path + button { margin-left: 4px; }
.status .path + button + button { margin-left: 11px; }
.filter { display: flex; align-items: center; width: 46px; height: 15px; margin-left: 11px; background: #fff; }
.filter select { appearance: none; flex: 1; border: 0; padding: 0 2px; background: none; font: inherit; color: #111; }
.filter .caret { margin-right: 3px; }
.sicons { display: flex; margin-right: 1px; }

.logo { position: absolute; right: 0; bottom: 14px; width: 175px; height: 78px; z-index: 2; overflow: visible; }
.logo text { font-family: "Noto Sans CJK SC", sans-serif; font-weight: 700; }
.logo .ji { font-size: 67px; fill: #0a70bc; }
.logo .sq { font-size: 20px; fill: #fff; }
.logo .url { font-family: "Noto Sans", sans-serif; font-size: 12px; fill: #0a70bc; }
```
